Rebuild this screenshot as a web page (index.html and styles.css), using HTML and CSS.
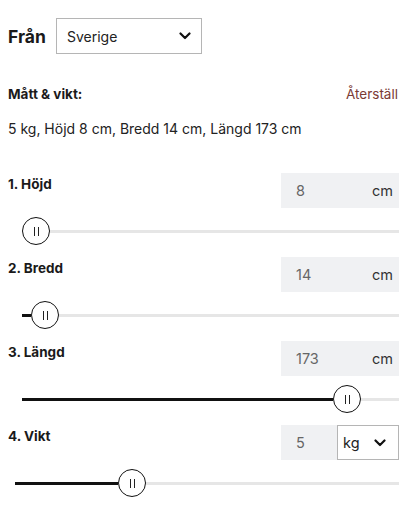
FILE: index.html
```html
<!DOCTYPE html>
<html lang="sv">
<head>
<meta charset="utf-8">
<link rel="stylesheet" href="styles.css">
</head>
<body>
<div class="page">
  <div class="from">
    <span class="from-label">Från</span>
    <div class="select">
      <span>Sverige</span>
      <svg class="chev" viewBox="0 0 12 8" width="12" height="8"><path d="M1.5 1.5 L6 6 L10.5 1.5" fill="none" stroke="#111" stroke-width="2.2" stroke-linecap="round" stroke-linejoin="round"/></svg>
    </div>
  </div>

  <div class="meas-head">
    <span class="meas-title">Mått &amp; vikt:</span>
    <span class="reset">Återställ</span>
  </div>
  <div class="summary">5 kg, Höjd 8 cm, Bredd 14 cm, Längd 173 cm</div>

  <div class="row">
    <div class="row-head">
      <span class="label">1. Höjd</span>
      <div class="box"><span class="num">8</span><span class="unit">cm</span></div>
    </div>
    <div class="slider">
      <div class="fill" style="width:0px"></div>
      <div class="thumb"><i></i><i></i></div>
      <div class="rest"></div>
    </div>
  </div>

  <div class="row">
    <div class="row-head">
      <span class="label">2. Bredd</span>
      <div class="box"><span class="num">14</span><span class="unit">cm</span></div>
    </div>
    <div class="slider">
      <div class="fill" style="width:9px"></div>
      <div class="thumb"><i></i><i></i></div>
      <div class="rest"></div>
    </div>
  </div>

  <div class="row">
    <div class="row-head">
      <span class="label">3. Längd</span>
      <div class="box"><span class="num">173</span><span class="unit">cm</span></div>
    </div>
    <div class="slider">
      <div class="fill" style="width:311px"></div>
      <div class="thumb"><i></i><i></i></div>
      <div class="rest"></div>
    </div>
  </div>

  <div class="row">
    <div class="row-head">
      <span class="label">4. Vikt</span>
      <div class="box box-select"><span class="num num-short">5</span>
        <div class="unit-select"><span>kg</span>
          <svg class="chev" viewBox="0 0 12 8" width="12" height="8"><path d="M1.5 1.5 L6 6 L10.5 1.5" fill="none" stroke="#111" stroke-width="2.2" stroke-linecap="round" stroke-linejoin="round"/></svg>
        </div>
      </div>
    </div>
    <div class="slider slider-wide">
      <div class="fill" style="width:103px"></div>
      <div class="thumb"><i></i><i></i></div>
      <div class="rest"></div>
    </div>
  </div>
</div>
</body>
</html>
```

FILE: styles.css
```css
* { box-sizing: border-box; }
html, body { margin: 0; padding: 0; background: #fff; }
body {
  font-family: Inter, "Noto Sans", "Liberation Sans", sans-serif;
  color: #1a1a1a;
  width: 417px;
}
.page {
  padding: 18px 18px 0 8px;
}
.from {
  display: flex;
  align-items: center;
  gap: 14px;
}
.from-label {
  font-size: 17.5px;
  font-weight: 700;
  width: 34px;
}
.select {
  width: 146px;
  height: 36px;
  border: 1px solid #b5b5b5;
  display: flex;
  align-items: center;
  justify-content: space-between;
  padding: 0 10px 0 10px;
  font-size: 14px;
  color: #222;
}
.chev { display: block; }
.meas-head {
  margin-top: 31px;
  display: flex;
  justify-content: space-between;
  align-items: center;
  height: 18px;
  font-size: 13.5px;
}
.meas-title { font-weight: 700; }
.reset { color: #7b3b35; font-size: 13.5px; margin-right: 1px; }
.summary {
  margin-top: 16px;
  font-size: 14px;
  line-height: 20px;
  color: #222;
}
.row {
  margin-top: 34px;
}
.row + .row { margin-top: 12px; }
.row-head {
  display: flex;
  justify-content: space-between;
  align-items: flex-start;
}
.label {
  font-size: 13.5px;
  font-weight: 700;
  line-height: 18px;
  padding-top: 2px;
}
.box {
  width: 118px;
  height: 35px;
  background: #f0f1f3;
  display: flex;
  align-items: center;
  font-size: 14.5px;
}
.num {
  flex: 1;
  padding-left: 15px;
  color: #666;
}
.unit {
  padding-right: 6px;
  color: #333;
}
.num-short { flex: 0 0 56px; }
.unit-select {
  flex: 1;
  align-self: stretch;
  background: #fff;
  border: 1px solid #b5b5b5;
  display: flex;
  align-items: center;
  justify-content: space-between;
  padding: 0 12px 0 5px;
  color: #222;
}
.slider {
  margin-top: 9px;
  padding-left: 14px;
  display: flex;
  align-items: center;
  height: 28px;
}
.slider-wide { padding-left: 7px; }
.fill {
  height: 3px;
  background: #111;
  flex: none;
}
.rest {
  flex: 1;
  height: 3px;
  background: #e6e6e6;
}
.thumb {
  width: 28px;
  height: 28px;
  border: 1.5px solid #111;
  border-radius: 50%;
  background: #fff;
  display: flex;
  align-items: center;
  justify-content: center;
  gap: 3px;
  flex: none;
}
.thumb i {
  display: block;
  width: 1px;
  height: 9px;
  background: #222;
}
```
